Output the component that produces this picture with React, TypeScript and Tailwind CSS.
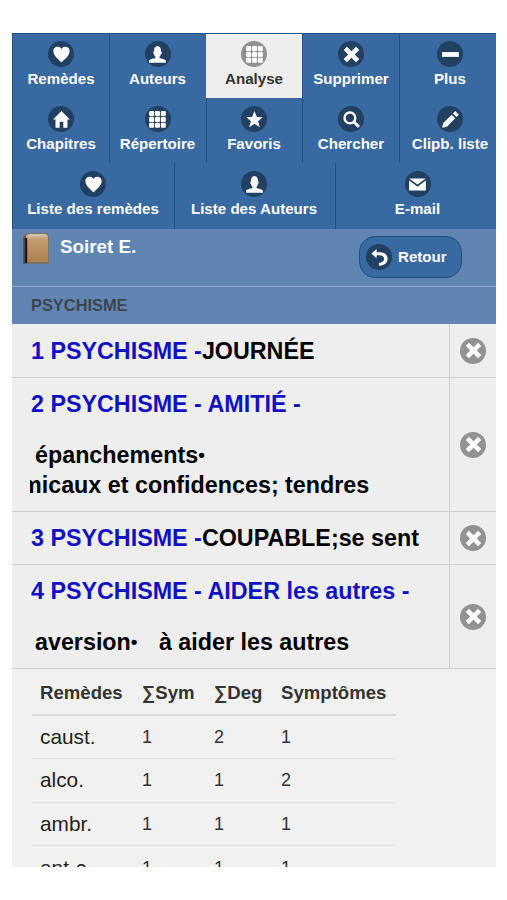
import type { ReactNode } from 'react';

type IconName = 'heart' | 'user' | 'grid' | 'delete' | 'minus' | 'home' | 'star' | 'search' | 'edit' | 'mail' | 'back';

const GLYPHS: Record<IconName, ReactNode> = {
    heart: <path d="M7 13.5C5.2 11.6.2 8 .2 4.2.2 1.900 1.800.5 3.700.5 5.200.5 6.400 1.200 7 2.400 7.600 1.200 8.800.5 10.300.5c1.900 0 3.500 1.400 3.500 3.700 0 3.800-5 7.400-6.800 9.300z" />,
    user: (
        <path d="M8.851 10.101c-.18-.399-.2-.763-.153-1.104.685-.507 1.04-1.376 1.193-2.532.602-.11.609-.498.609-.965 0-.437-.008-.804-.502-.94L10 4.500C10 1.877 9 0 7 0S4 1.877 4 4.500l.002.06C3.508 4.696 3.500 5.063 3.500 5.500c0 .467.007.855.609.965.153 1.156.508 2.025 1.194 2.532.047.341.026.704-.153 1.104C1.503 10.503 0 12 0 12v2h14v-2s-1.503-1.497-5.149-1.899z" />
    ),
    grid: (
        <>
            {[0, 4.9, 9.8].map((y) =>
                [0, 4.9, 9.8].map((x) => <rect key={`${x}-${y}`} x={x} y={y} width="4.2" height="4.2" rx=".9" />)
            )}
        </>
    ),
    delete: <path d="M13.500 3.200L10.800.5 7 4.300 3.200.5.5 3.200 4.300 7 .5 10.800l2.700 2.700L7 9.700l3.800 3.800 2.700-2.700L9.700 7z" />,
    minus: <path d="M0 5h14v4H0z" />,
    home: <path d="M7 0L0 7h2v7h3.500V9h3v5H12V7h2z" />,
    star: <path d="M7 0l2 5h5l-4 3.500 1.500 5L7 10.500l-4.500 3 1.500-5L0 5h5z" />,
    search: (
        <g fill="none" stroke="currentColor" strokeWidth="2">
            <circle cx="5.700" cy="5.700" r="4.500" />
            <path d="M8.900 8.900l4.300 4.300" strokeWidth="2.500" />
        </g>
    ),
    edit: <path d="M1 10l-1 4 4-1 7-7-3-3zM11 0L9 2l3 3 2-2z" />,
    mail: <path d="M0 3.750V12h14V3.750L7 9zM14 2H0l7 5z" />,
    back: <path d="M4.600 2.700V0L.2 3.800l4.400 3.800V5.100h2.200c2.700 0 4 1.300 4 3.100 0 2-1.600 3-4.300 3.400V14c4.600-.2 7.300-2.300 7.300-5.900 0-3.500-2.700-5.400-6.600-5.400z" />,
};

function Icon({ name, className = 'bg-[#214062]' }: { name: IconName; className?: string }) {
    return (
        <span className={`flex size-[26px] shrink-0 items-center justify-center rounded-full text-white ${className}`}>
            <svg viewBox="-0.1 -0.1 14.200 14.200" className="size-[17px] -translate-x-[0.5px] -translate-y-[0.5px] overflow-visible" fill="currentColor">
                <g transform="translate(.4 .4)">{GLYPHS[name]}</g>
            </svg>
        </span>
    );
}

function NavButton({ icon, label, active = false, className = 'pt-[8px]' }: { icon: IconName; label: string; active?: boolean; className?: string }) {
    return (
        <button
            className={`flex flex-col items-center border-l text-[15.1px] leading-[20px] font-bold whitespace-nowrap ${
                active ? 'border-[#eee] bg-[#eee] text-[#333]' : 'border-[#1f5286] text-white'
            } ${className}`}
        >
            <Icon name={icon} className={active ? 'bg-[#929292]' : 'bg-[#214062]'} />
            <span className="mt-[2px]">{label}</span>
        </button>
    );
}

function ListRow({ className, children }: { className: string; children: ReactNode }) {
    return (
        <li className={`flex border-b border-[#cfcfcf] bg-[#eee] ${className}`}>
            <div className="ml-[18px] flex-1 overflow-hidden pl-px text-[23.3px] leading-[30px] font-bold whitespace-nowrap text-black">
                {children}
            </div>
            <button className="flex w-[47px] items-center justify-center border-l border-[#cfcfcf]">
                <Icon name="delete" className="bg-[#929292]" />
            </button>
        </li>
    );
}

function Bullet() {
    return <span className="relative -top-[2px] text-[19px] leading-none">•</span>;
}

const REMEDIES = [
    { name: 'caust.', sym: 1, deg: 2, count: 1 },
    { name: 'alco.', sym: 1, deg: 1, count: 2 },
    { name: 'ambr.', sym: 1, deg: 1, count: 1 },
    { name: 'ant-c.', sym: 1, deg: 1, count: 1 },
];

export default function App() {
    return (
        <div className="h-[900px] w-[507px] overflow-hidden bg-white pt-[33px] pl-[12px] font-['Liberation_Sans',Arial,sans-serif]">
            <main className="h-[834px] w-[484px] overflow-hidden bg-[#f1f1f1]">
                {/* Toolbar */}
                <nav className="h-[196px] border-t border-[#1f5286] bg-[#3869a0]">
                    <div className="grid h-[64px] grid-cols-[97px_97px_96px_97px_97px]">
                        <NavButton icon="heart" label="Remèdes" className="pt-[7px]" />
                        <NavButton icon="user" label="Auteurs" className="pt-[7px] pr-px" />
                        <NavButton icon="grid" label="Analyse" active className="pt-[7px] pr-px" />
                        <NavButton icon="delete" label="Supprimer" className="pt-[7px]" />
                        <NavButton icon="minus" label="Plus" className="pt-[7px] pl-[4px]" />
                    </div>
                    <div className="grid h-[65px] grid-cols-[97px_97px_96px_97px_97px]">
                        <NavButton icon="home" label="Chapitres" />
                        <NavButton icon="grid" label="Répertoire" className="pt-[8px] pr-px" />
                        <NavButton icon="star" label="Favoris" className="pt-[8px] pr-px" />
                        <NavButton icon="search" label="Chercher" />
                        <NavButton icon="edit" label="Clipb. liste" className="pt-[8px] pl-[4px]" />
                    </div>
                    <div className="grid h-[66px] grid-cols-[162px_161px_161px]">
                        <NavButton icon="heart" label="Liste des remèdes" className="pt-[8px] pr-px" />
                        <NavButton icon="user" label="Liste des Auteurs" className="pt-[8px] pr-[2px]" />
                        <NavButton icon="mail" label="E-mail" className="pt-[8px] pl-[3px]" />
                    </div>
                </nav>

                {/* Author header */}
                <header className="flex h-[58px] justify-between border-b border-[#8fa9c9] bg-[#6185b2] pr-[34px] pl-[10px]">
                    <div className="flex">
                        <svg viewBox="0 0 27 33" className="mt-[3px] h-[33px] w-[27px]">
                            <defs>
                                <linearGradient id="cover" x1="0" y1="0" x2="0" y2="1">
                                    <stop offset="0" stopColor="#d9c7b4" />
                                    <stop offset=".2" stopColor="#c39b70" />
                                    <stop offset="1" stopColor="#ad8050" />
                                </linearGradient>
                            </defs>
                            <path d="M1 5Q2 1 7 1h16q4 0 4 4v27H1z" fill="#77716c" />
                            <path d="M1 6l3-3v29H1z" fill="#5d5753" />
                            <path d="M4 6Q4 2 8 2h14q4 0 4 4v24H5z" fill="url(#cover)" />
                            <path d="M4 6v25" stroke="#1c1a1c" strokeWidth="2.500" />
                        </svg>
                        <h1 className="mt-[7px] ml-[11px] text-[18.8px] leading-[22px] font-bold text-white">Soiret E.</h1>
                    </div>
                    <button className="mt-[7px] flex h-[42px] w-[103px] items-center rounded-[16px] border-[1.500px] border-[#1f4f80] bg-[#3869a0] pl-[6px] text-[15.1px] font-bold text-white">
                        <Icon name="back" />
                        <span className="mt-px ml-[6px]">Retour</span>
                    </button>
                </header>

                <h2 className="h-[37px] bg-[#6185b2] pl-[19px] text-[16.4px] leading-[37px] font-bold text-[#3d4550]">PSYCHISME</h2>

                {/* Selected symptoms */}
                <ul>
                    <ListRow className="h-[54px]">
                        <p className="pt-[12px]">
                            <span className="text-[#1111c4]">1 PSYCHISME -</span>JOURNÉE
                        </p>
                    </ListRow>
                    <ListRow className="h-[134px]">
                        <p className="pt-[11px] text-[#1111c4]">2 PSYCHISME - AMITIÉ -</p>
                        <p className="mt-[21px] pl-[4px]">
                            épanchements
                            <Bullet />
                        </p>
                        <p className="-ml-[10px]">micaux et confidences; tendres</p>
                    </ListRow>
                    <ListRow className="h-[53px]">
                        <p className="pt-[11px]">
                            <span className="text-[#1111c4]">3 PSYCHISME -</span>COUPABLE;se sent
                        </p>
                    </ListRow>
                    <ListRow className="h-[104px]">
                        <p className="pt-[11px] text-[#1111c4]">4 PSYCHISME - AIDER les autres -</p>
                        <p className="mt-[21px] pl-[4px] whitespace-pre">
                            aversion
                            <Bullet />
                            <span className="ml-[2px]">{'   à aider les autres'}</span>
                        </p>
                    </ListRow>
                </ul>

                {/* Remedies totals */}
                <table className="ml-[20px] w-[364px] table-fixed border-collapse text-left text-[#333]">
                    <colgroup>
                        <col className="w-[102px]" />
                        <col className="w-[72px]" />
                        <col className="w-[67px]" />
                        <col className="w-[123px]" />
                    </colgroup>
                    <thead>
                        <tr className="h-[46px] border-b-2 border-[#dadada] text-[18.600px] leading-[22px]">
                            <th className="pt-[3px] pl-[8px]">Remèdes</th>
                            <th className="pt-[3px] pl-[8px]">∑Sym</th>
                            <th className="pt-[3px] pl-[8px]">∑Deg</th>
                            <th className="pt-[3px] pl-[8px]">Symptômes</th>
                        </tr>
                    </thead>
                    <tbody>
                        {REMEDIES.map((remedy) => (
                            <tr key={remedy.name} className="h-[43.6px] border-b border-[#dfdfdf] text-[18px] leading-[22px]">
                                <td className="pl-[8px] text-[20.800px] text-[#222]">{remedy.name}</td>
                                <td className="pl-[8px]">{remedy.sym}</td>
                                <td className="pl-[8px]">{remedy.deg}</td>
                                <td className="pl-[8px]">{remedy.count}</td>
                            </tr>
                        ))}
                    </tbody>
                </table>
            </main>
        </div>
    );
}
